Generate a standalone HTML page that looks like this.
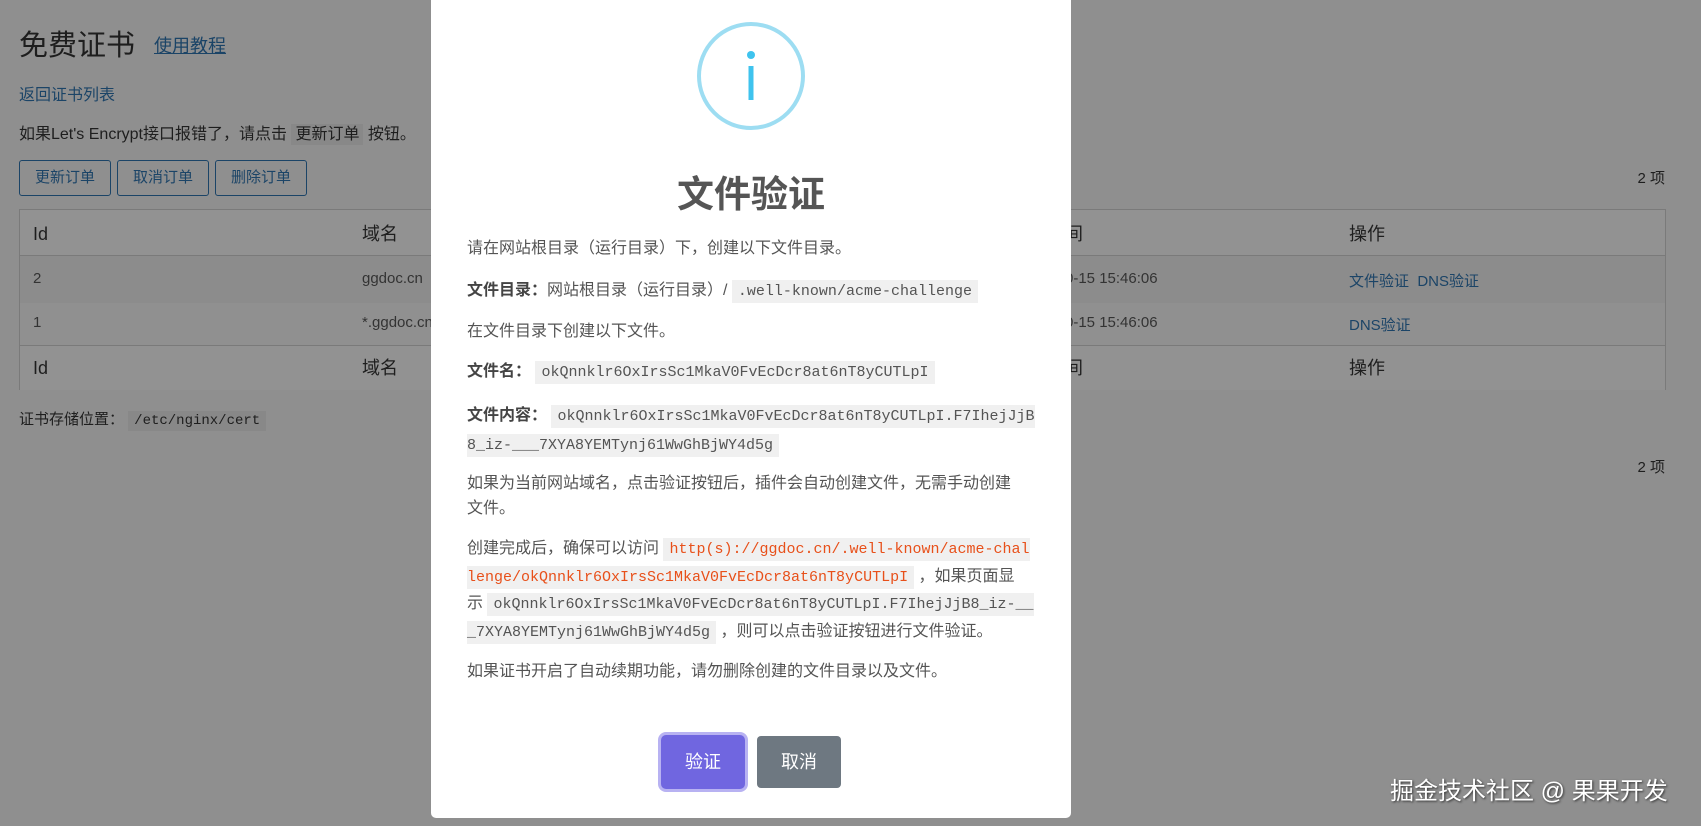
<!DOCTYPE html>
<html><head><meta charset="utf-8">
<style>
*{margin:0;padding:0;box-sizing:border-box}
body{width:1701px;height:826px;overflow:hidden;background:#8f8f8f;font-family:"Liberation Sans","Noto Sans CJK SC",sans-serif;color:#1e1e1e;position:relative}
.a{position:absolute;white-space:nowrap}
.lk{color:#1b4467}
.btn{position:absolute;top:160px;height:36px;border:1px solid #1b4467;border-radius:3px;color:#1b4467;font-size:15px;line-height:34px;text-align:center;width:92px}
.tbl{position:absolute;left:19px;top:209px;width:1647px;height:181px;border:1px solid #7a7a7a}
.row{position:absolute;left:0;width:100%}
.bc{background:#888;color:#1e1e1e;font-family:"Liberation Mono",monospace;font-size:14px;padding:2px 6px}
.modal{position:absolute;left:431px;top:0;width:640px;height:818px;background:#fff;border-radius:0 0 5px 5px}
.p{position:absolute;left:36px;width:600px;font-size:16px;color:#545454;line-height:26px;white-space:nowrap}
code{font-family:"Liberation Mono",monospace;font-size:15px;background:#f0f0f0;padding:3px 6px;color:#545454}
code.r{color:#e8501a}
b{color:#444}
</style></head><body>
<div class="a" style="left:19px;top:22px;font-size:29px;color:#1e1e1e">免费证书</div>
<div class="a lk" style="left:154px;top:32px;font-size:18px;text-decoration:underline">使用教程</div>
<div class="a lk" style="left:19px;top:81px;font-size:16px">返回证书列表</div>
<div class="a" style="left:19px;top:120px;font-size:16px">如果Let's Encrypt接口报错了，请点击 <span style="background:#888;padding:2px 4px">更新订单</span> 按钮。</div>
<div class="btn" style="left:19px">更新订单</div>
<div class="btn" style="left:117px">取消订单</div>
<div class="btn" style="left:215px">删除订单</div>
<div class="a" style="right:36px;top:167px;font-size:15px">2 项</div>
<div class="tbl">
 <div class="row" style="top:0;height:46px;background:#929292;border-bottom:1px solid #7a7a7a"></div>
 <div class="row" style="top:46px;height:47px;background:#8c8c8c"></div>
 <div class="row" style="top:93px;height:43px;background:#909090;border-bottom:1px solid #7a7a7a"></div>
 <div class="row" style="top:136px;height:44px;background:#929292"></div>
 <div class="a" style="left:13px;top:13px;font-size:18px;line-height:22px">Id</div>
 <div class="a" style="left:342px;top:13px;font-size:18px;line-height:22px">域名</div>
 <div class="a" style="left:1045px;top:13px;font-size:18px;line-height:22px">间</div>
 <div class="a" style="left:1329px;top:13px;font-size:18px;line-height:22px">操作</div>
 <div class="a" style="left:13px;top:60px;font-size:15px;color:#333">2</div>
 <div class="a" style="left:342px;top:60px;font-size:15px;color:#333">ggdoc.cn</div>
 <div class="a" style="left:1045px;top:60px;font-size:15px;color:#333">0-15 15:46:06</div>
 <div class="a lk" style="left:1329px;top:60px;font-size:15px">文件验证&nbsp; DNS验证</div>
 <div class="a" style="left:13px;top:104px;font-size:15px;color:#333">1</div>
 <div class="a" style="left:342px;top:104px;font-size:15px;color:#333">*.ggdoc.cn</div>
 <div class="a" style="left:1045px;top:104px;font-size:15px;color:#333">0-15 15:46:06</div>
 <div class="a lk" style="left:1329px;top:104px;font-size:15px">DNS验证</div>
 <div class="a" style="left:13px;top:147px;font-size:18px;line-height:22px">Id</div>
 <div class="a" style="left:342px;top:147px;font-size:18px;line-height:22px">域名</div>
 <div class="a" style="left:1045px;top:147px;font-size:18px;line-height:22px">间</div>
 <div class="a" style="left:1329px;top:147px;font-size:18px;line-height:22px">操作</div>
</div>
<div class="a" style="left:19px;top:408px;font-size:15px">证书存储位置： <span class="bc">/etc/nginx/cert</span></div>
<div class="a" style="right:36px;top:456px;font-size:15px">2 项</div>
<div class="a" style="left:1390px;top:771px;font-size:24px;color:#fff;text-shadow:1px 1px 2px #333">掘金技术社区 @ 果果开发</div>

<div class="modal">
 <svg class="a" style="left:264px;top:22px" width="112" height="112" viewBox="0 0 112 112">
  <circle cx="56" cy="54" r="52" fill="none" stroke="#9dddf2" stroke-width="4"/>
  <circle cx="56" cy="33" r="4" fill="#3fc3ee"/>
  <rect x="53.5" y="44" width="5" height="34" fill="#3fc3ee"/>
 </svg>
 <div class="a" style="left:0;width:640px;text-align:center;top:164px;font-size:37px;font-weight:bold;color:#555">文件验证</div>
 <div class="p" style="top:236px">请在网站根目录（运行目录）下，创建以下文件目录。</div>
 <div class="p" style="top:278px"><b>文件目录：</b>网站根目录（运行目录）/ <code>.well-known/acme-challenge</code></div>
 <div class="p" style="top:319px">在文件目录下创建以下文件。</div>
 <div class="p" style="top:359px"><b>文件名：</b> <code>okQnnklr6OxIrsSc1MkaV0FvEcDcr8at6nT8yCUTLpI</code></div>
 <div class="p" style="top:402px;line-height:28px"><b>文件内容：</b> <code>okQnnklr6OxIrsSc1MkaV0FvEcDcr8at6nT8yCUTLpI.F7IhejJjB<br>8_iz-___7XYA8YEMTynj61WwGhBjWY4d5g</code></div>
 <div class="p" style="top:471px;line-height:25px">如果为当前网站域名，点击验证按钮后，插件会自动创建文件，无需手动创建<br>文件。</div>
 <div class="p" style="top:536px;line-height:26.5px">创建完成后，确保可以访问 <code class="r">http(s)://ggdoc.cn/.well-known/acme-chal<br>lenge/okQnnklr6OxIrsSc1MkaV0FvEcDcr8at6nT8yCUTLpI</code> ，如果页面显<br>示 <code>okQnnklr6OxIrsSc1MkaV0FvEcDcr8at6nT8yCUTLpI.F7IhejJjB8_iz-__<br>_7XYA8YEMTynj61WwGhBjWY4d5g</code> ，则可以点击验证按钮进行文件验证。</div>
 <div class="p" style="top:659px">如果证书开启了自动续期功能，请勿删除创建的文件目录以及文件。</div>
 <div class="a" style="left:230px;top:735px;width:84px;height:54px;border-radius:5px;background:#7066e0;box-shadow:0 0 0 3px #b8b2f2;color:#fff;font-size:18px;line-height:54px;text-align:center">验证</div>
 <div class="a" style="left:326px;top:736px;width:84px;height:52px;border-radius:4px;background:#6e7881;color:#fff;font-size:18px;line-height:52px;text-align:center">取消</div>
</div>
</body></html>
